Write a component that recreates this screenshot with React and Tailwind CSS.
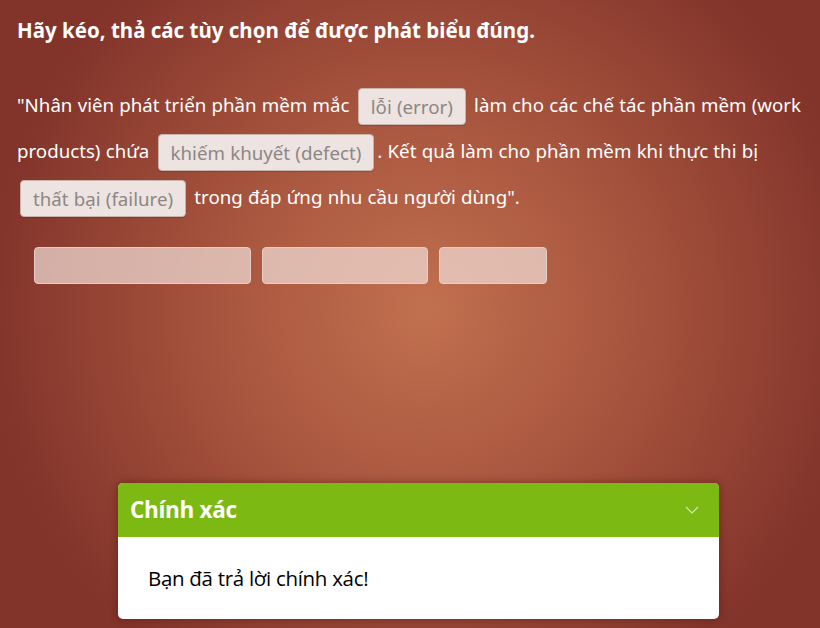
import React from "react";

function Chip({ children }) {
  return (
    <span className="inline-block mx-[3px] px-[12px] leading-[35px] h-[37px] align-middle rounded-[4px] border border-[#c9b3ad] bg-[#ede3e0] text-[#8c8785] shadow-[0_1px_1px_rgba(0,0,0,0.15)]">
      {children}
    </span>
  );
}

export default function App() {
  return (
    <div className="w-[820px] h-[628px] overflow-hidden bg-[radial-gradient(circle_440px_at_425px_310px,#c1704f_0%,#a9563f_45%,#82332a_100%)] font-['Noto_Sans',sans-serif] text-white">
      <div className="px-[17px] pt-[16px]">
        <h1 className="text-[20.5px] font-bold leading-[28px]">
          Hãy kéo, thả các tùy chọn để được phát biểu đúng.
        </h1>
        <p className="mt-[38px] text-[18.7px] leading-[46px] [word-spacing:0.4px]">
          "Nhân viên phát triển phần mềm mắc <Chip>lỗi (error)</Chip> làm cho các chế tác phần mềm (work products) chứa <Chip>khiếm khuyết (defect)</Chip>. Kết quả làm cho phần mềm khi thực thi bị <Chip>thất bại (failure)</Chip> trong đáp ứng nhu cầu người dùng".
        </p>
        <div className="flex gap-[11px] pl-[17px] mt-[27px]">
          <div className="w-[217px] h-[37px] rounded-[4px] border border-[#e6cdc6] bg-[rgba(240,220,214,0.72)]" />
          <div className="w-[166px] h-[37px] rounded-[4px] border border-[#e6cdc6] bg-[rgba(240,220,214,0.72)]" />
          <div className="w-[108px] h-[37px] rounded-[4px] border border-[#e6cdc6] bg-[rgba(240,220,214,0.72)]" />
        </div>
      </div>
      <div className="ml-[118px] mt-[199px] w-[601px] rounded-[5px] overflow-hidden bg-white shadow-[0_0_8px_rgba(60,10,0,0.45)]">
        <div className="h-[54px] bg-[#7db913] flex items-center justify-between pl-[12px] pr-[20px]">
          <span className="font-['Open_Sans',sans-serif] font-bold text-[22.5px] tracking-[-0.3px]">Chính xác</span>
          <svg width="14" height="8" viewBox="0 0 14 8" fill="none" stroke="#d6eab0" strokeWidth="1.2">
            <path d="M1 1l6 6 6-6" />
          </svg>
        </div>
        <div className="h-[82px] flex items-center pl-[30px] text-black font-['Open_Sans',sans-serif] text-[20.5px] tracking-[-0.3px]">
          Bạn đã trả lời chính xác!
        </div>
      </div>
    </div>
  );
}
